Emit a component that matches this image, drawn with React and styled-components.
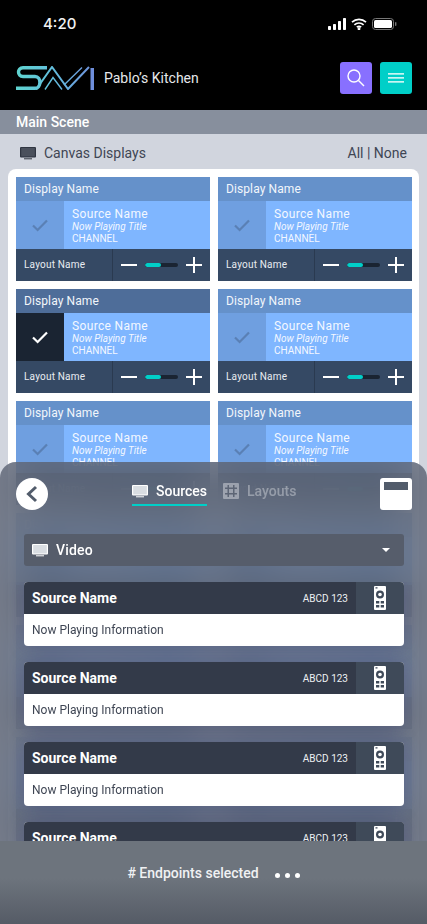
import styled, { createGlobalStyle } from "styled-components";

const GlobalStyle = createGlobalStyle`
  html, body { margin: 0; padding: 0; background: #000; }
  * { box-sizing: border-box; }
`;

const Page = styled.div`
  position: relative;
  width: 427px;
  height: 924px;
  overflow: hidden;
  background: #d1d5de;
  font-family: Roboto, "Liberation Sans", sans-serif;
`;

const TopArea = styled.header`
  height: 110px;
  background: #000;
  color: #fff;
  display: flex;
  flex-direction: column;
`;

const StatusBar = styled.div`
  height: 62px;
  padding: 13px 30px 0 43px;
  display: flex;
  justify-content: space-between;
  align-items: flex-start;
  span {
    font-family: Inter, sans-serif;
    font-size: 15px;
    font-weight: 500;
    line-height: 22px;
    color: #f2f2f2;
  }
`;

const StatusIcons = styled.div`
  display: flex;
  align-items: center;
  margin-top: 5px;
  gap: 5px;
`;

const BrandRow = styled.div`
  display: flex;
  align-items: center;
  padding: 0 15px 0 16px;
  height: 32px;
  p {
    margin: 0 0 0 10px;
    flex: 1;
    font-size: 14px;
    color: #e6e8eb;
  }
`;

const SquareButton = styled.button`
  width: 32px;
  height: 32px;
  border: none;
  padding: 0;
  margin-left: 8px;
  border-radius: 3px;
  background: ${(p) => p.$bg};
  display: flex;
  align-items: center;
  justify-content: center;
`;

const SceneBar = styled.div`
  height: 24px;
  background: #878f9d;
  color: #fff;
  font-size: 14px;
  font-weight: 500;
  line-height: 24px;
  padding-left: 16px;
`;

const CanvasRow = styled.div`
  height: 35px;
  padding: 2px 20px 0 20px;
  display: flex;
  align-items: center;
  color: #3f4654;
  font-size: 14px;
  gap: 8px;
  b {
    font-weight: 400;
    flex: 1;
  }
`;

const WhitePanel = styled.section`
  margin: 0 8px;
  padding: 8px;
  background: #fff;
  border-radius: 8px 8px 0 0;
  display: grid;
  grid-template-columns: 194px 194px;
  gap: 8px;
`;

const DisplayCard = styled.article`
  display: flex;
  flex-direction: column;
  color: #fff;
`;

const DisplayHead = styled.div`
  height: 24px;
  line-height: 24px;
  padding-left: 8px;
  font-size: 12px;
  letter-spacing: 0.1px;
  color: #f2f6fb;
  background: ${(p) => (p.$selected ? "#4e6d99" : "#6591ca")};
`;

const DisplayBody = styled.div`
  height: 48px;
  display: flex;
  background: #7fb6ff;
`;

const CheckBox = styled.div`
  width: 48px;
  display: flex;
  align-items: center;
  justify-content: center;
  background: ${(p) => (p.$selected ? "#1a2432" : "#6f9fe0")};
`;

const SourceInfo = styled.div`
  padding: 6px 0 0 8px;
  display: flex;
  flex-direction: column;
  color: #f4f8ff;
  strong {
    font-weight: 400;
    font-size: 12px;
    line-height: 14px;
    letter-spacing: 0.35px;
  }
  em {
    font-weight: 400;
    font-size: 10px;
    line-height: 12px;
  }
  span {
    font-weight: 400;
    font-size: 10px;
    line-height: 11px;
  }
`;

const DisplayFoot = styled.div`
  height: 32px;
  display: flex;
  align-items: center;
  background: #354964;
`;

const LayoutLabel = styled.div`
  width: 97px;
  height: 100%;
  line-height: 32px;
  padding-left: 8px;
  font-size: 10px;
  letter-spacing: 0.2px;
  color: #e8ecf1;
  border-right: 1px solid #2a3a50;
`;

const VolumeControls = styled.div`
  flex: 1;
  display: flex;
  align-items: center;
  justify-content: space-between;
  padding: 0 8px;
`;

const Slider = styled.div`
  width: 33px;
  height: 4px;
  border-radius: 2px;
  background: #1a2432;
  overflow: hidden;
  div {
    height: 100%;
    width: 16px;
    border-radius: 2px;
    background: #00cfc8;
  }
`;

const Sheet = styled.section`
  position: absolute;
  left: 0;
  right: 0;
  top: 462px;
  bottom: 0;
  display: flex;
  flex-direction: column;
  border-radius: 16px 16px 0 0;
  background: rgba(92, 99, 114, 0.78);
  backdrop-filter: blur(18px);
  color: #fff;
`;

const SheetTop = styled.div`
  height: 32px;
  margin: 16px 15px 0 16px;
  display: flex;
  align-items: flex-start;
`;

const BackButton = styled.button`
  width: 32px;
  height: 32px;
  padding: 0;
  border: none;
  border-radius: 50%;
  background: #fff;
  display: flex;
  align-items: center;
  justify-content: center;
`;

const Tabs = styled.nav`
  margin-left: 84px;
  flex: 1;
  display: flex;
  gap: 16px;
`;

const Tab = styled.div`
  height: 28px;
  display: flex;
  align-items: center;
  gap: 8px;
  font-size: 14px;
  font-weight: 500;
  padding-bottom: 1px;
  color: ${(p) => (p.$active ? "#fff" : "rgba(255,255,255,0.35)")};
  border-bottom: 2px solid ${(p) => (p.$active ? "#00cfc8" : "transparent")};
`;

const LayoutToggle = styled.button`
  width: 32px;
  height: 32px;
  padding: 4px;
  border: none;
  border-radius: 3px;
  background: #fff;
  display: flex;
  align-items: flex-start;
  i {
    display: block;
    width: 100%;
    height: 8px;
    background: #525c6b;
  }
`;

const Dropdown = styled.div`
  margin: 24px 23px 0 24px;
  height: 32px;
  border-radius: 3px;
  background: #565d6b;
  padding: 0 14px 0 8px;
  display: flex;
  align-items: center;
  gap: 8px;
  font-size: 14px;
  font-weight: 500;
  letter-spacing: 0.2px;
  span {
    flex: 1;
  }
  i {
    width: 0;
    height: 0;
    border-left: 4px solid transparent;
    border-right: 4px solid transparent;
    border-top: 4px solid #fff;
  }
`;

const SourceList = styled.div`
  flex: 1;
  min-height: 0;
  overflow: hidden;
  margin-top: 16px;
  padding: 0 23px 0 24px;
  display: flex;
  flex-direction: column;
  gap: 16px;
`;

const SourceCard = styled.article`
  flex: none;
  border-radius: 4px;
  overflow: hidden;
  background: #fff;
  box-shadow: 0 0 16px rgba(70, 70, 130, 0.35);
`;

const SourceHead = styled.div`
  height: 32px;
  display: flex;
  align-items: center;
  background: #333a49;
  padding-left: 8px;
  strong {
    flex: 1;
    font-size: 14px;
    font-weight: 700;
  }
  span {
    font-size: 10px;
    color: #eef0f3;
    margin-right: 8px;
  }
`;

const RemoteSlot = styled.div`
  width: 48px;
  height: 32px;
  background: #3f4a59;
  display: flex;
  align-items: center;
  justify-content: center;
`;

const SourceBody = styled.div`
  height: 32px;
  line-height: 32px;
  padding-left: 8px;
  font-size: 12px;
  color: #3f4654;
`;

const SheetFoot = styled.footer`
  flex: none;
  height: 83px;
  padding-top: 24px;
  display: flex;
  justify-content: center;
  align-items: flex-start;
  gap: 16px;
  font-size: 14px;
  font-weight: 500;
  color: #f0f1f3;
  background: linear-gradient(#6d747d 0%, #6d747d 45%, #555b66 100%);
  div {
    display: flex;
    gap: 5px;
    height: 20px;
    align-items: center;
  }
  i {
    width: 5px;
    height: 5px;
    border-radius: 50%;
    background: #fff;
  }
`;

const MonitorIcon = ({ color = "#fff", size = 16 }) => (
  <svg width={size} height={size} viewBox="0 0 16 16" fill="none">
    <rect x="0" y="2" width="16" height="10.5" rx="1" fill={color} />
    <rect x="1.2" y="3" width="13.6" height="8.4" fill={color === "#fff" ? "#d9dde2" : "#4a505c"} />
    <rect x="4" y="13.3" width="8" height="1" fill={color} />
  </svg>
);

const CheckIcon = ({ color }) => (
  <svg width="16" height="16" viewBox="0 0 16 16" fill="none">
    <path d="M1 8.5 L5.6 13 L15 3.5" stroke={color} strokeWidth="2.2" />
  </svg>
);

const MinusIcon = () => (
  <svg width="16" height="16" viewBox="0 0 16 16">
    <rect x="0" y="7" width="16" height="2" fill="#fff" />
  </svg>
);

const PlusIcon = () => (
  <svg width="16" height="16" viewBox="0 0 16 16">
    <rect x="0" y="7" width="16" height="2" fill="#fff" />
    <rect x="7" y="0" width="2" height="16" fill="#fff" />
  </svg>
);

const GridIcon = () => (
  <svg width="16" height="16" viewBox="0 0 16 16">
    <rect width="16" height="16" rx="1" fill="#fff" fillOpacity="0.38" />
    <g fill="#5d6575">
      <rect x="4.5" y="2" width="1.5" height="12" />
      <rect x="10" y="2" width="1.5" height="12" />
      <rect x="2" y="4.5" width="12" height="1.5" />
      <rect x="2" y="10" width="12" height="1.5" />
    </g>
  </svg>
);

const RemoteIcon = () => (
  <svg width="12" height="24" viewBox="0 0 12 24">
    <path
      fillRule="evenodd"
      fill="#fff"
      d="M1 0H11A1 1 0 0 1 12 1V23A1 1 0 0 1 11 24H1A1 1 0 0 1 0 23V1A1 1 0 0 1 1 0Z
         M6 4.5A4 4 0 1 0 6 12.5A4 4 0 1 0 6 4.5Z
         M2 15H5.3V17.6H2Z M6.7 15H10V17.6H6.7Z M2 19H5.3V21.6H2Z M6.7 19H10V21.6H6.7Z
         M1.5 1.2H3.5V2.6H1.5Z"
    />
    <circle cx="6" cy="8.5" r="1.8" fill="#fff" />
  </svg>
);

const Logo = () => (
  <svg width="78" height="24" viewBox="0 0 78 24" fill="none">
    <defs>
      <linearGradient id="savi" gradientUnits="userSpaceOnUse" x1="0" y1="0" x2="78" y2="0">
        <stop offset="0" stopColor="#5fd4cf" />
        <stop offset="0.45" stopColor="#62bfdc" />
        <stop offset="1" stopColor="#6f8fdc" />
      </linearGradient>
    </defs>
    <path
      stroke="url(#savi)"
      strokeWidth="3.4"
      d="M31 1.7H7C1 1.7 1 10.5 7 10.5H19C25.5 10.5 25.5 22.3 19 22.3H0"
    />
    <path
      stroke="url(#savi)"
      strokeWidth="2"
      d="M20 23.5L36 1L52 23L73 1"
    />
    <path
      stroke="url(#savi)"
      strokeWidth="1.4"
      d="M29 23.5L37 11.5L46 23.5 M48 19L66 1.5"
    />
    <rect x="74.5" y="2" width="3.5" height="22" fill="#6f8fdc" />
  </svg>
);

const displays = [0, 1, 2, 3, 4, 5, 6, 7, 8, 9, 10, 11, 12, 13];
const sources = [0, 1, 2, 3];

export default function App() {
  return (
    <Page>
      <GlobalStyle />
      <TopArea>
        <StatusBar>
          <span>4:20</span>
          <StatusIcons>
            <svg width="18" height="12" viewBox="0 0 18 12" fill="#fff">
              <rect x="0" y="8" width="3" height="4" rx="0.7" />
              <rect x="5" y="6" width="3" height="6" rx="0.7" />
              <rect x="10" y="3" width="3" height="9" rx="0.7" />
              <rect x="15" y="0" width="3" height="12" rx="0.7" />
            </svg>
            <svg width="16" height="12" viewBox="0 0 16 12" fill="none" stroke="#fff" strokeWidth="1.7">
              <path d="M1 4.2C5 .4 11 .4 15 4.2" />
              <path d="M3.4 6.8C6 4.4 10 4.4 12.6 6.8" />
              <path d="M5.8 9.2C7 8.2 9 8.2 10.2 9.2" />
              <circle cx="8" cy="10.8" r="0.6" fill="#fff" />
            </svg>
            <svg width="25" height="12" viewBox="0 0 25 12" fill="none">
              <rect x="0.5" y="0.5" width="21" height="11" rx="3" stroke="#777" />
              <rect x="2" y="2" width="18" height="8" rx="1.6" fill="#fff" />
              <rect x="23" y="4" width="1.4" height="4" rx="0.7" fill="#777" />
            </svg>
          </StatusIcons>
        </StatusBar>
        <BrandRow>
          <Logo />
          <p>Pablo’s Kitchen</p>
          <SquareButton $bg="#8870ff">
            <svg width="18" height="18" viewBox="0 0 18 18" fill="none" stroke="#fff" strokeWidth="1.4">
              <circle cx="7" cy="7" r="6" />
              <path d="M11.5 11.5L17 17" />
            </svg>
          </SquareButton>
          <SquareButton $bg="#00cfc8">
            <svg width="16" height="10" viewBox="0 0 16 10" fill="#c9f5f2">
              <rect y="0" width="16" height="1.7" />
              <rect y="4" width="16" height="1.7" />
              <rect y="8" width="16" height="1.7" />
            </svg>
          </SquareButton>
        </BrandRow>
      </TopArea>
      <SceneBar>Main Scene</SceneBar>
      <CanvasRow>
        <MonitorIcon color="#2f3541" />
        <b>Canvas Displays</b>
        <span>All | None</span>
      </CanvasRow>
      <WhitePanel>
        {displays.map((d) => (
          <DisplayCard key={d}>
            <DisplayHead $selected={d === 2}>Display Name</DisplayHead>
            <DisplayBody>
              <CheckBox $selected={d === 2}>
                <CheckIcon color={d === 2 ? "#fff" : "#5a80b5"} />
              </CheckBox>
              <SourceInfo>
                <strong>Source Name</strong>
                <em>Now Playing Title</em>
                <span>CHANNEL</span>
              </SourceInfo>
            </DisplayBody>
            <DisplayFoot>
              <LayoutLabel>Layout Name</LayoutLabel>
              <VolumeControls>
                <MinusIcon />
                <Slider>
                  <div />
                </Slider>
                <PlusIcon />
              </VolumeControls>
            </DisplayFoot>
          </DisplayCard>
        ))}
      </WhitePanel>

      <Sheet>
        <SheetTop>
          <BackButton>
            <svg width="14" height="18" viewBox="0 0 14 18" fill="none" stroke="#525c6b" strokeWidth="3">
              <path d="M11 2L3.5 9L11 16" />
            </svg>
          </BackButton>
          <Tabs>
            <Tab $active>
              <MonitorIcon />
              Sources
            </Tab>
            <Tab>
              <GridIcon />
              Layouts
            </Tab>
          </Tabs>
          <LayoutToggle>
            <i />
          </LayoutToggle>
        </SheetTop>
        <Dropdown>
          <MonitorIcon />
          <span>Video</span>
          <i />
        </Dropdown>
        <SourceList>
          {sources.map((s) => (
            <SourceCard key={s}>
              <SourceHead>
                <strong>Source Name</strong>
                <span>ABCD 123</span>
                <RemoteSlot>
                  <RemoteIcon />
                </RemoteSlot>
              </SourceHead>
              <SourceBody>Now Playing Information</SourceBody>
            </SourceCard>
          ))}
        </SourceList>
        <SheetFoot>
          <span># Endpoints selected</span>
          <div>
            <i />
            <i />
            <i />
          </div>
        </SheetFoot>
      </Sheet>
    </Page>
  );
}
